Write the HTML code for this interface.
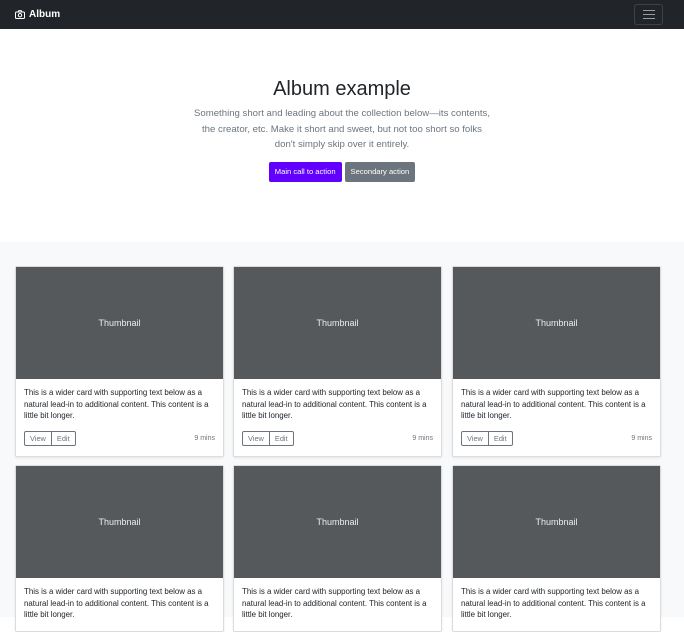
<!DOCTYPE html>
<html><head><meta charset="utf-8"><style>
*{box-sizing:border-box;margin:0;padding:0}
body{width:684px;height:617px;overflow:hidden;background:#fff;font-family:"Liberation Sans","DejaVu Sans",sans-serif;color:#212529}
.nav{height:29px;background:#212529;position:relative}
.brand{position:absolute;left:15px;top:9px;color:#fff;font-weight:bold;font-size:10px;display:flex;align-items:center;gap:4px}
.tog{position:absolute;left:634px;top:4px;width:29px;height:21px;border:1px solid #3e4246;border-radius:3px}
.tog i{position:absolute;left:8px;width:12px;height:1px;background:#9a9da0}
.hero{height:213px;text-align:center;padding-top:49px}
.hero h1{font-weight:300;font-size:20px;color:#212529;margin-bottom:5px}
.hero p{font-size:9.6px;line-height:15.5px;color:#6c757d;white-space:nowrap;margin:0 auto}
.btns{margin-top:9px;display:flex;justify-content:center;gap:3px}
.b{font-size:7.6px;color:#fff;height:20px;line-height:20px;padding:0 6px;border-radius:2px}
.album{background:#f8f9fa;height:375px;position:relative}
.card{position:absolute;width:209px;background:#fff;border:1px solid #dcdcdc;border-radius:2px;box-shadow:0 1px 2px rgba(0,0,0,.08)}
.th{height:112px;background:#55595c;color:#eceeef;font-size:9px;display:flex;align-items:center;justify-content:center}
.cb{padding:8px 8px 10px}
.cb p{font-size:7.9px;line-height:11.7px;color:#212529}
.ft{display:flex;justify-content:space-between;align-items:center;margin-top:9px}
.g{display:flex}
.g span{font-size:7.4px;color:#6c757d;border:1px solid #6c757d;padding:0 5px;height:15px;line-height:13px}
.g span:first-child{border-radius:2px 0 0 2px}
.g span:last-child{border-left:0;border-radius:0 2px 2px 0}
.m{font-size:7px;color:#6c757d}
</style></head><body>
<div class="nav"><div class="brand"><svg width="10" height="9" viewBox="0 0 10 9"><rect x=".5" y="2" width="9" height="6.5" rx="1" fill="none" stroke="#fff"/><path d="M3 2 L3.8 .6 H6.2 L7 2" fill="none" stroke="#fff"/><circle cx="5" cy="5.2" r="1.7" fill="none" stroke="#fff"/></svg>Album</div>
<div class="tog"><i style="top:5px"></i><i style="top:9px"></i><i style="top:13px"></i></div></div>
<div class="hero"><h1>Album example</h1><p>Something short and leading about the collection below—its contents,<br>the creator, etc. Make it short and sweet, but not too short so folks<br>don't simply skip over it entirely.</p>
<div class="btns"><span class="b" style="background:#6200ff">Main call to action</span><span class="b" style="background:#6c757d">Secondary action</span></div></div>
<div class="album">
<div class="card" style="left:15px;top:24px"><div class="th">Thumbnail</div><div class="cb"><p>This is a wider card with supporting text below as a natural lead-in to additional content. This content is a little bit longer.</p><div class="ft"><div class="g"><span>View</span><span>Edit</span></div><span class="m">9 mins</span></div></div></div>
<div class="card" style="left:233px;top:24px"><div class="th">Thumbnail</div><div class="cb"><p>This is a wider card with supporting text below as a natural lead-in to additional content. This content is a little bit longer.</p><div class="ft"><div class="g"><span>View</span><span>Edit</span></div><span class="m">9 mins</span></div></div></div>
<div class="card" style="left:452px;top:24px"><div class="th">Thumbnail</div><div class="cb"><p>This is a wider card with supporting text below as a natural lead-in to additional content. This content is a little bit longer.</p><div class="ft"><div class="g"><span>View</span><span>Edit</span></div><span class="m">9 mins</span></div></div></div>
<div class="card" style="left:15px;top:223px"><div class="th">Thumbnail</div><div class="cb"><p>This is a wider card with supporting text below as a natural lead-in to additional content. This content is a little bit longer.</p></div></div>
<div class="card" style="left:233px;top:223px"><div class="th">Thumbnail</div><div class="cb"><p>This is a wider card with supporting text below as a natural lead-in to additional content. This content is a little bit longer.</p></div></div>
<div class="card" style="left:452px;top:223px"><div class="th">Thumbnail</div><div class="cb"><p>This is a wider card with supporting text below as a natural lead-in to additional content. This content is a little bit longer.</p></div></div>
</div>
</body></html>
